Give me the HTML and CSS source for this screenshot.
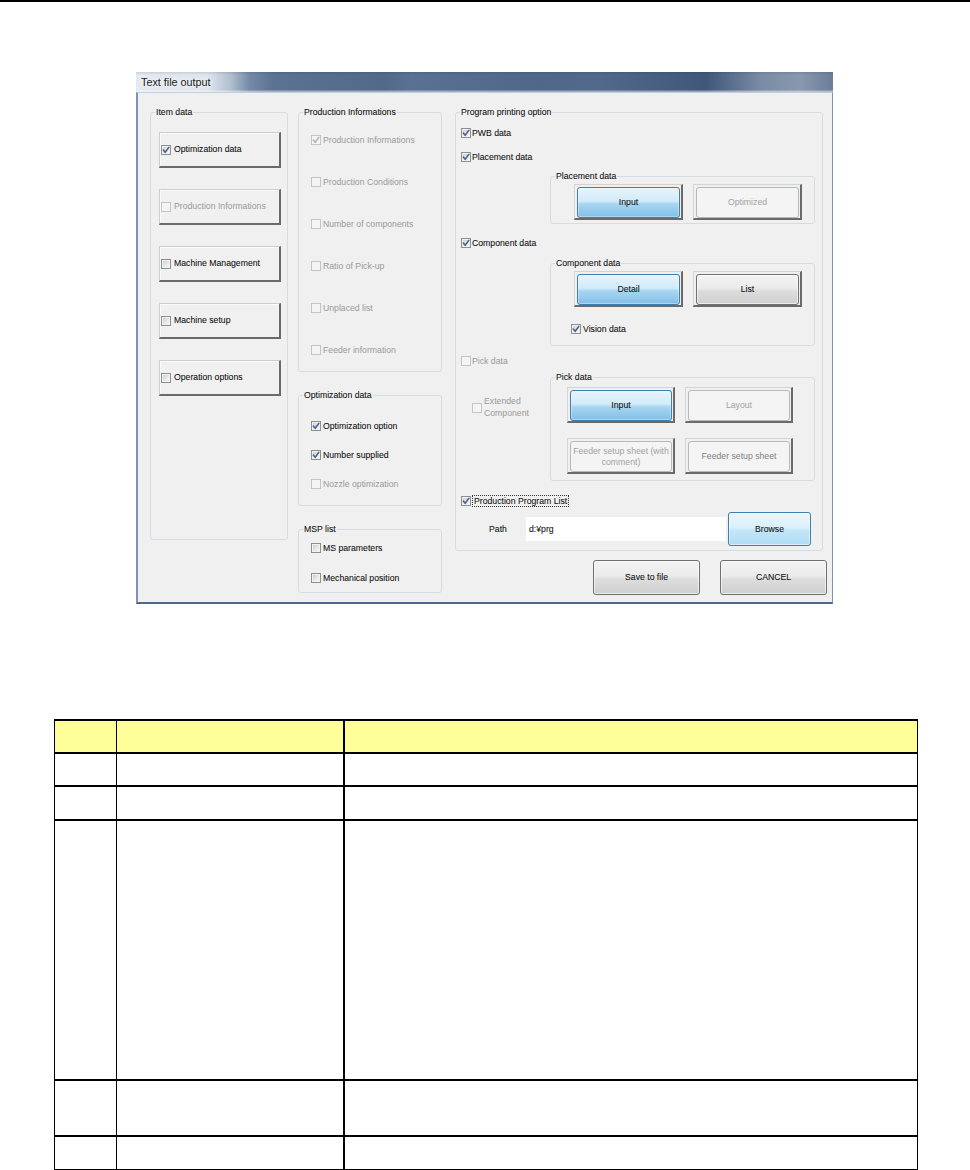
FILE: index.html
```html
<!DOCTYPE html>
<html>
<head>
<meta charset="utf-8">
<title>Text file output</title>
<link rel="stylesheet" href="styles.css">
</head>
<body>
<div class="topline"></div>

<div class="window">
  <div class="titlebar"><span class="title">Text file output</span></div>
  <div class="client">

    <div class="group g-item">
      <span class="glabel">Item data</span>
      <div class="item-btn"><span class="cb"><svg viewBox="0 0 8 8"><path d="M1.3 4.1 L3.2 6.3 L6.8 1.4"/></svg></span>Optimization data</div>
      <div class="item-btn dis"><span class="cb dis"></span>Production Informations</div>
      <div class="item-btn"><span class="cb"></span>Machine Management</div>
      <div class="item-btn"><span class="cb"></span>Machine setup</div>
      <div class="item-btn"><span class="cb"></span>Operation options</div>
    </div>

    <div class="col-b">
      <div class="group g-pi">
        <span class="glabel">Production Informations</span>
        <div class="chk dis"><span class="cb dis"><svg viewBox="0 0 8 8"><path d="M1.3 4.1 L3.2 6.3 L6.8 1.4"/></svg></span>Production Informations</div>
        <div class="chk dis"><span class="cb dis"></span>Production Conditions</div>
        <div class="chk dis"><span class="cb dis"></span>Number of components</div>
        <div class="chk dis"><span class="cb dis"></span>Ratio of Pick-up</div>
        <div class="chk dis"><span class="cb dis"></span>Unplaced list</div>
        <div class="chk dis"><span class="cb dis"></span>Feeder information</div>
      </div>
      <div class="group g-od">
        <span class="glabel">Optimization data</span>
        <div class="chk"><span class="cb"><svg viewBox="0 0 8 8"><path d="M1.3 4.1 L3.2 6.3 L6.8 1.4"/></svg></span>Optimization option</div>
        <div class="chk"><span class="cb"><svg viewBox="0 0 8 8"><path d="M1.3 4.1 L3.2 6.3 L6.8 1.4"/></svg></span>Number supplied</div>
        <div class="chk dis"><span class="cb dis"></span>Nozzle optimization</div>
      </div>
      <div class="group g-msp">
        <span class="glabel">MSP list</span>
        <div class="chk"><span class="cb"></span>MS parameters</div>
        <div class="chk"><span class="cb"></span>Mechanical position</div>
      </div>
    </div>

    <div class="col-c">
      <div class="group g-ppo">
        <span class="glabel">Program printing option</span>
        <div class="chk tight"><span class="cb"><svg viewBox="0 0 8 8"><path d="M1.3 4.1 L3.2 6.3 L6.8 1.4"/></svg></span>PWB data</div>
        <div class="chk tight r-place"><span class="cb"><svg viewBox="0 0 8 8"><path d="M1.3 4.1 L3.2 6.3 L6.8 1.4"/></svg></span>Placement data</div>

        <div class="group sub sub-place">
          <span class="glabel">Placement data</span>
          <div class="btnrow">
            <div class="frame"><div class="in blue">Input</div></div>
            <div class="frame"><div class="in off">Optimized</div></div>
          </div>
        </div>

        <div class="chk tight r-comp"><span class="cb"><svg viewBox="0 0 8 8"><path d="M1.3 4.1 L3.2 6.3 L6.8 1.4"/></svg></span>Component data</div>

        <div class="group sub sub-comp">
          <span class="glabel">Component data</span>
          <div class="btnrow">
            <div class="frame"><div class="in blue">Detail</div></div>
            <div class="frame"><div class="in gray">List</div></div>
          </div>
          <div class="chk vision"><span class="cb"><svg viewBox="0 0 8 8"><path d="M1.3 4.1 L3.2 6.3 L6.8 1.4"/></svg></span>Vision data</div>
        </div>

        <div class="chk tight dis r-pick"><span class="cb dis"></span>Pick data</div>

        <div class="pickrow">
          <div class="ext"><span class="cb dis"></span><span>Extended<br>Component</span></div>
          <div class="group sub sub-pick">
            <span class="glabel">Pick data</span>
            <div class="btnrow">
              <div class="frame pf"><div class="in blue">Input</div></div>
              <div class="frame pf"><div class="in off">Layout</div></div>
            </div>
            <div class="btnrow second">
              <div class="frame pf"><div class="in off">Feeder setup sheet (with<br>comment)</div></div>
              <div class="frame pf"><div class="in off dim">Feeder setup sheet</div></div>
            </div>
          </div>
        </div>

        <div class="chk tight r-ppl"><span class="cb"><svg viewBox="0 0 8 8"><path d="M1.3 4.1 L3.2 6.3 L6.8 1.4"/></svg></span><span class="focus">Production Program List</span></div>

        <div class="pathrow">
          <span class="path-label">Path</span>
          <div class="path-input">d:¥prg</div>
          <div class="wbtn browse">Browse</div>
        </div>
      </div>

      <div class="actions">
        <div class="wbtn">Save to file</div>
        <div class="wbtn">CANCEL</div>
      </div>
    </div>

  </div>
</div>

<table class="spec">
  <colgroup><col class="w1"><col class="w2"><col class="w3"></colgroup>
  <tr class="head h33"><td></td><td class="c2"></td><td></td></tr>
  <tr class="h33"><td></td><td class="c2"></td><td></td></tr>
  <tr class="h34"><td></td><td class="c2"></td><td></td></tr>
  <tr class="h260"><td></td><td class="c2"></td><td></td></tr>
  <tr class="h56"><td></td><td class="c2"></td><td></td></tr>
  <tr class="h34"><td></td><td class="c2"></td><td></td></tr>
</table>
</body>
</html>
```

FILE: styles.css
```css
body {
  margin: 0;
  background: #fff;
  font-family: "Liberation Sans", Arial, sans-serif;
}

.topline {
  height: 2px;
  background: #000;
}

/* ---------- dialog window ---------- */
.window {
  width: 697px;
  margin: 70px 0 0 136px;
  font-size: 8.7px;
  line-height: 11px;
  color: #111;
  -webkit-text-stroke: 0.08px currentColor;
}

.titlebar {
  height: 20px;
  box-sizing: border-box;
  padding-left: 5px;
  display: flex;
  align-items: center;
  background:
    linear-gradient(to bottom, rgba(20,30,50,0.12) 0, rgba(20,30,50,0) 3px, rgba(255,255,255,0) 18px, rgba(255,255,255,0.45) 19px),
    linear-gradient(to right, #e4eaf1 0, #dde4ed 72px, #b3c0d0 94px, #7489a6 114px, #5b7293 138px, #52698a 250px, #5a7193 275px, #4f6789 400px, #52698b 460px, #405779 570px, #7a8ca5 625px, #8898ae 665px, #6a7d99 697px);
}

.title {
  font-size: 10.8px;
  color: #1a1a1a;
  -webkit-text-stroke: 0;
  text-shadow: 0 0 4px #fff, 0 0 6px #fff;
}

.client {
  height: 490px;
  background: #f0f0f0;
  border-style: solid;
  border-width: 1px 1px 2px 2px;
  border-color: #c3cedb #8094ad #4f6788 #8094ad;
  display: flex;
  align-items: flex-start;
  padding: 19px 0 0 12px;
}

/* ---------- group boxes ---------- */
.group {
  position: relative;
  box-sizing: border-box;
  border: 1px solid #d5dde3;
  border-radius: 3px;
}

.glabel {
  position: absolute;
  top: -6px;
  left: 4px;
  padding: 0 1px;
  background: #f0f0f0;
  line-height: 11px;
  white-space: nowrap;
  color: #111;
}

/* ---------- checkboxes ---------- */
.chk {
  display: flex;
  align-items: center;
  gap: 2px;
  height: 12px;
  white-space: nowrap;
}

.chk.dis, .item-btn.dis, .ext {
  color: #9a9a9a;
  -webkit-text-stroke: 0;
}

.cb {
  flex: none;
  width: 10px;
  height: 10px;
  box-sizing: border-box;
  border: 1px solid #8e8f8f;
  background: linear-gradient(135deg, #c6cad0, #eef0f2 70%, #f7f7f7);
  box-shadow: inset 0 0 0 1px #f2f2f2;
  display: flex;
  align-items: center;
  justify-content: center;
}

.cb svg {
  width: 8px;
  height: 8px;
  display: block;
}

.cb svg path {
  fill: none;
  stroke: #4c6190;
  stroke-width: 1.6;
  stroke-linecap: round;
  stroke-linejoin: round;
}

.cb.dis {
  border-color: #c4c4c4;
  background: #f4f4f4;
  box-shadow: none;
}

.cb.dis svg path {
  stroke: #b4b4b4;
}

/* ---------- item data ---------- */
.g-item {
  width: 138px;
  height: 428px;
  padding: 19px 0 0 8px;
}

.item-btn {
  width: 122px;
  height: 36px;
  box-sizing: border-box;
  border-style: solid;
  border-width: 1px 2px 2px 1px;
  border-color: #cdcdcd #6a6a6a #6a6a6a #cdcdcd;
  box-shadow: inset 1px 1px #fafafa;
  display: flex;
  align-items: center;
  gap: 3px;
  padding-left: 1px;
  margin-bottom: 21px;
  white-space: nowrap;
}

/* ---------- column B ---------- */
.col-b {
  margin-left: 10px;
  width: 144px;
  display: flex;
  flex-direction: column;
}

.g-pi {
  height: 260px;
  padding: 21px 0 0 12px;
}

.g-pi .chk + .chk { margin-top: 30px; }

.g-od {
  margin-top: 23px;
  height: 111px;
  padding: 24px 0 0 12px;
}

.g-od .chk + .chk { margin-top: 17px; }

.g-msp {
  margin-top: 23px;
  height: 64px;
  padding: 12px 0 0 12px;
}

.g-msp .chk + .chk { margin-top: 18px; }

/* ---------- column C ---------- */
.col-c {
  margin-left: 13px;
  width: 372px;
}

.g-ppo {
  width: 368px;
  height: 439px;
  padding: 14px 0 0 5px;
}

.chk.tight { gap: 1px; }

.r-place { margin-top: 12px; }
.r-comp { margin-top: 13px; }
.r-pick { margin-top: 9px; }
.r-ppl { margin-top: 14px; }

.sub {
  width: 265px;
  margin-left: 89px;
}

.sub-place {
  height: 48px;
  margin-top: 13px;
  padding: 7px 0 0 23px;
}

.sub-comp {
  height: 83px;
  margin-top: 14px;
  padding: 7px 0 0 23px;
}

.vision {
  margin-top: 16px;
  margin-left: -3px;
}

.pickrow {
  display: flex;
  align-items: flex-start;
  margin-top: 10px;
}

.ext {
  width: 78px;
  margin-left: 11px;
  margin-top: 19px;
  display: flex;
  align-items: center;
  gap: 2px;
  line-height: 11.5px;
}

.sub-pick {
  margin-left: 0;
  height: 104px;
  padding: 9px 0 0 16px;
}

.btnrow {
  display: flex;
  gap: 10px;
}

.btnrow.second { margin-top: 15px; }

.frame {
  width: 109px;
  height: 36px;
  box-sizing: border-box;
  border-style: solid;
  border-width: 1px 2px 2px 1px;
  border-color: #d4d4d4 #6a6a6a #6a6a6a #d4d4d4;
  padding: 2px 1px 0 2px;
  display: flex;
}

.frame.pf { width: 108px; }

.in {
  flex: 1;
  box-sizing: border-box;
  border: 1px solid #707070;
  border-radius: 3px;
  display: flex;
  align-items: center;
  justify-content: center;
  text-align: center;
  line-height: 10.5px;
}

.in.blue {
  border-color: #3c7fb1;
  background: linear-gradient(#e6f4fc, #d2ebfa 45%, #a8d5f1 55%, #82bfe6);
  box-shadow: inset 0 0 0 1px rgba(255,255,255,0.35);
}

.in.gray {
  background: linear-gradient(#f3f3f3, #ebebeb 45%, #dddddd 55%, #cfcfcf);
  box-shadow: inset 0 0 0 1px rgba(255,255,255,0.6);
}

.in.off {
  border-color: #b5b9bc;
  background: #f4f4f4;
  color: #a3a3a3;
  -webkit-text-stroke: 0;
}

.in.off.dim { color: #808080; }

.focus {
  border: 1px dotted #333;
  padding: 0 1px;
  line-height: 10px;
}

.pathrow {
  display: flex;
  align-items: center;
  height: 34px;
  margin-top: 5px;
}

.path-label {
  margin-left: 28px;
  width: 37px;
}

.path-input {
  width: 200px;
  height: 24px;
  box-sizing: border-box;
  background: #fff;
  padding-left: 3px;
  display: flex;
  align-items: center;
}

.wbtn {
  width: 107px;
  height: 35px;
  box-sizing: border-box;
  border: 1px solid #707070;
  border-radius: 3px;
  background: linear-gradient(#f3f3f3, #ebebeb 45%, #dddddd 55%, #cfcfcf);
  box-shadow: inset 0 0 0 1px rgba(255,255,255,0.6);
  display: flex;
  align-items: center;
  justify-content: center;
}

.wbtn.browse {
  width: 83px;
  height: 34px;
  margin-left: 2px;
  border-color: #3c7fb1;
  background: linear-gradient(#eaf6fd, #d9f0fc 45%, #c2e5f8 55%, #b0dcf4);
  box-shadow: inset 0 0 0 1px rgba(255,255,255,0.5);
}

.actions {
  display: flex;
  justify-content: flex-end;
  gap: 20px;
  margin-top: 9px;
}

/* ---------- table ---------- */
.spec {
  border-collapse: separate;
  border-spacing: 0;
  table-layout: fixed;
  width: 864px;
  margin: 115px 0 0 54px;
  border-top: 2px solid #000;
  border-left: 1px solid #000;
}

.spec .w1 { width: 62px; }
.spec .w2 { width: 228px; }
.spec .w3 { width: 573px; }

.spec td {
  padding: 0;
  border-right: 1px solid #000;
  border-bottom: 2px solid #000;
}

.spec td.c2 { border-right-width: 2px; }

.spec tr.head td { background: #ffff99; }

.h33 { height: 33px; }
.h34 { height: 34px; }
.h56 { height: 56px; }
.h260 { height: 260px; }
```
